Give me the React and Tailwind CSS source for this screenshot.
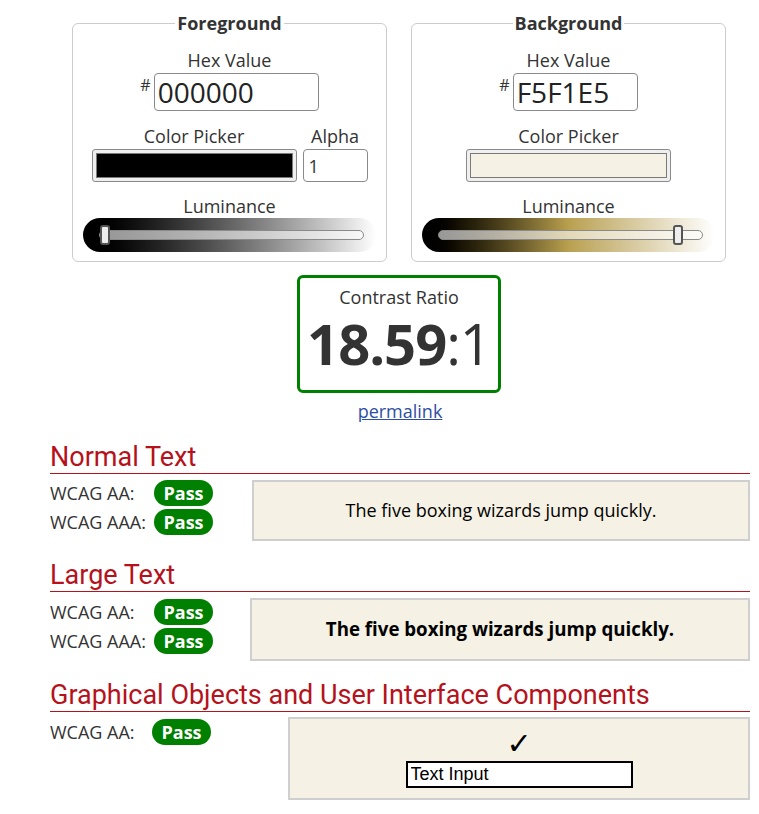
import React from "react";

function Fieldset({ title, children }) {
  return (
    <fieldset className="w-[315px] border border-[#cccccc] rounded-[6px] pt-[12px] pb-[9px] px-[10px] min-w-0">
      <legend className="mx-auto px-[2px] font-bold text-[18px] leading-[25px] text-[#333]">{title}</legend>
      {children}
    </fieldset>
  );
}

function HexRow({ value, width }) {
  return (
    <>
      <div className="h-[25px] leading-[25px] text-center text-[#333]">Hex Value</div>
      <div className="flex justify-center items-start h-[38px]">
        <span className="text-[16px] leading-[16px] mt-[4px] mr-[3px] text-[#333]">#</span>
        <input
          readOnly
          value={value}
          className={`${width} h-[38px] border border-[#8a8a8a] rounded-[4px] bg-white pl-[3px] text-[28px] text-[#222] outline-none font-['Open_Sans',sans-serif]`}
        />
      </div>
    </>
  );
}

function Picker({ color }) {
  return (
    <div className="h-[33px] w-[205px] bg-[#efefef] border border-[#8a8a8a] rounded-[3px] p-[3px]">
      <div className={`h-full w-full border border-[#7a7a7a] ${color}`} />
    </div>
  );
}

function Slider({ gradient, thumbLeft }) {
  return (
    <div className={`h-[34px] rounded-full flex items-center pl-[16px] pr-[12px] ${gradient}`}>
      <div className="relative flex-1 h-[10px] rounded-full border border-[#8a8a8a] bg-white/60">
        <div
          className="absolute top-[-6px] w-[10px] h-[20px] bg-[#eeeeee] border-2 border-[#555] rounded-[3px]"
          style={{ left: thumbLeft }}
        />
      </div>
    </div>
  );
}

function Badge() {
  return (
    <div className="w-[59px] h-[26px] rounded-full bg-[#008000] text-white font-bold text-[18px] leading-[26px] text-center">
      Pass
    </div>
  );
}

function Row({ label, labelW }) {
  return (
    <div className="flex items-center h-[26px]">
      <div className={`${labelW} text-[18px] leading-[26px] text-[#333]`}>{label}</div>
      <Badge />
    </div>
  );
}

function Heading({ children, mt }) {
  return (
    <h2 className={`${mt} h-[33px] border-b border-[#b5121b] font-['Roboto',sans-serif] text-[27px] leading-[32px] text-[#b5121b]`}>
      {children}
    </h2>
  );
}

export default function App() {
  return (
    <div className="bg-white min-h-[814px] pt-[11px] pl-[50px] font-['Open_Sans',sans-serif] text-[18px] text-[#333]">
      <div className="w-[700px]">
        <div className="flex gap-[24px] pl-[22px]">
          <Fieldset title="Foreground">
            <HexRow value="000000" width="w-[165px]" />
            <div className="mt-[13px] flex justify-center gap-[6px]">
              <div className="flex flex-col items-center">
                <div className="h-[25px] leading-[25px]">Color Picker</div>
                <Picker color="bg-black" />
              </div>
              <div className="flex flex-col items-center">
                <div className="h-[25px] leading-[25px]">Alpha</div>
                <input
                  readOnly
                  value="1"
                  className="w-[65px] h-[33px] border border-[#8a8a8a] rounded-[4px] bg-white pl-[5px] text-[18px] text-[#333] outline-none font-['Open_Sans',sans-serif]"
                />
              </div>
            </div>
            <div className="mt-[12px] h-[24px] leading-[24px] text-center">Luminance</div>
            <Slider gradient="bg-linear-to-r from-black to-white" thumbLeft={0} />
          </Fieldset>
          <Fieldset title="Background">
            <HexRow value="F5F1E5" width="w-[125px]" />
            <div className="mt-[13px] flex justify-center">
              <div className="flex flex-col items-center">
                <div className="h-[25px] leading-[25px]">Color Picker</div>
                <Picker color="bg-[#f5f1e5]" />
              </div>
            </div>
            <div className="mt-[12px] h-[24px] leading-[24px] text-center">Luminance</div>
            <Slider gradient="bg-linear-to-r from-black via-[#b9a04f] to-white" thumbLeft={234} />
          </Fieldset>
        </div>

        <div className="mt-[13px] ml-[247px] w-[204px] h-[118px] border-[3px] border-[#008000] rounded-[6px] flex flex-col items-center pt-[7px]">
          <div className="h-[25px] leading-[25px] text-[#333]">Contrast Ratio</div>
          <div className="mt-[8px] text-[56px] leading-[50px] tracking-[-1px] text-[#333]">
            <span className="font-bold">18.59</span>:1
          </div>
        </div>
        <div className="mt-[6px] text-center leading-[25px]">
          <a href="#" className="underline text-[#2e4ea3]">permalink</a>
        </div>

        <Heading mt="mt-[17px]">Normal Text</Heading>
        <div className="mt-[6px] flex">
          <div className="w-[202px] flex flex-col gap-[3px]">
            <Row label="WCAG AA:" labelW="w-[104px]" />
            <Row label="WCAG AAA:" labelW="w-[104px]" />
          </div>
          <div className="flex-1 h-[61px] bg-[#f5f1e5] border-2 border-[#cfcfcf] flex items-center justify-center text-black text-[18px]">
            The five boxing wizards jump quickly.
          </div>
        </div>

        <Heading mt="mt-[18px]">Large Text</Heading>
        <div className="mt-[6px] flex">
          <div className="w-[200px] flex flex-col gap-[3px] pt-[1px]">
            <Row label="WCAG AA:" labelW="w-[104px]" />
            <Row label="WCAG AAA:" labelW="w-[104px]" />
          </div>
          <div className="flex-1 h-[63px] bg-[#f5f1e5] border-2 border-[#cfcfcf] flex items-center justify-center text-black font-bold text-[18.7px]">
            The five boxing wizards jump quickly.
          </div>
        </div>

        <Heading mt="mt-[18px]">Graphical Objects and User Interface Components</Heading>
        <div className="mt-[5px] flex">
          <div className="w-[238px] pt-[2px]">
            <Row label="WCAG AA:" labelW="w-[102px]" />
          </div>
          <div className="flex-1 h-[83px] bg-[#f5f1e5] border-2 border-[#cfcfcf] flex flex-col items-center justify-center">
            <div className="font-['DejaVu_Sans',sans-serif] text-[30px] leading-[30px] text-black">✓</div>
            <input
              readOnly
              value="Text Input"
              className="mt-[2px] w-[227px] h-[27px] border-2 border-black bg-white px-[3px] text-[18px] text-black outline-none font-['Liberation_Sans',Arial,sans-serif]"
            />
          </div>
        </div>
      </div>
    </div>
  );
}
